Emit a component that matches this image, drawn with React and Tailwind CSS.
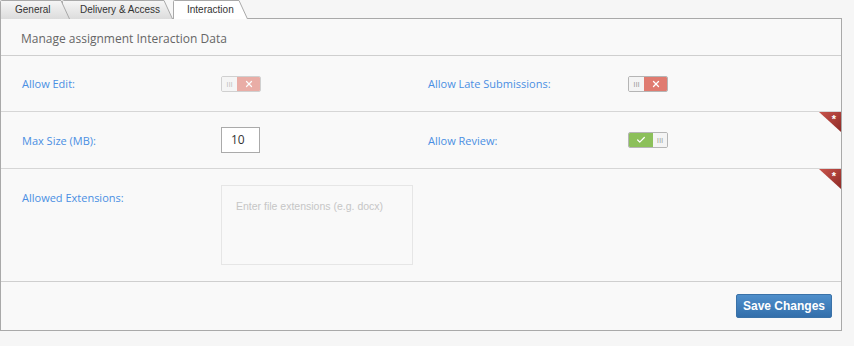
import { Check, X } from "lucide-react";

const Toggle = ({ on, faded }) => (
  <div
    className={`flex h-[16px] w-[40px] overflow-hidden rounded-[2px] border border-[#b5b5b5] ${
      faded ? "opacity-60" : ""
    }`}
  >
    {on ? (
      <>
        <div className="flex w-[24px] items-center justify-center bg-[#8cc05a]">
          <Check size={10} strokeWidth={3} className="text-white" />
        </div>
        <div className="flex flex-1 items-center justify-center bg-[#f4f4f4] text-[8px] leading-none text-[#999]">
          III
        </div>
      </>
    ) : (
      <>
        <div className="flex flex-1 items-center justify-center bg-[#f4f4f4] text-[8px] leading-none text-[#999]">
          III
        </div>
        <div className="flex w-[23px] items-center justify-center bg-[#e07b70]">
          <X size={10} strokeWidth={3} className="text-white" />
        </div>
      </>
    )}
  </div>
);

const Corner = () => (
  <div className="absolute right-0 top-0 h-[20px] w-[22px]">
    <svg width="22" height="20" viewBox="0 0 22 20">
      <defs>
        <linearGradient id="cg" x1="0" y1="0" x2="1" y2="1">
          <stop offset="0" stopColor="#c8544c" />
          <stop offset="1" stopColor="#8e2a26" />
        </linearGradient>
      </defs>
      <polygon points="0,0 22,0 22,20" fill="url(#cg)" />
      <text x="15" y="11" fill="#fff" fontSize="11" fontWeight="bold" fontFamily="Liberation Sans" textAnchor="middle">
        *
      </text>
    </svg>
  </div>
);

const Tab = ({ label, active, width, className, textClass }) => (
  <div className={`relative h-[19px] ${className}`} style={{ width }}>
    <svg className="absolute left-0 top-0" width={width} height="19">
      <defs>
        <linearGradient id="tg" x1="0" y1="0" x2="0" y2="1">
          <stop offset="0" stopColor="#f6f6f6" />
          <stop offset="1" stopColor="#dcdcdc" />
        </linearGradient>
      </defs>
      <path
        d={`M0.5 19 V1.5 Q0.5 0.5 1.5 0.5 H${width - 10} L${width - 1.5} 19`}
        fill={active ? "#ffffff" : "url(#tg)"}
        stroke="#a9a9a9"
      />
    </svg>
    <div className={`relative flex h-full items-center text-[10px] text-[#333] ${textClass}`}>{label}</div>
  </div>
);

export default function App() {
  return (
    <div className="h-[346px] w-[854px] bg-[#f6f6f6] font-['Liberation_Sans',sans-serif]">
      <div className="relative z-10 -mb-[1px] flex h-[19px]">
        <Tab label="General" width={71} className="z-20" textClass="pl-[15px]" />
        <Tab label="Delivery & Access" width={112} className="z-10 -ml-[9px]" textClass="pl-[18px]" />
        <Tab label="Interaction" active width={76} className="z-30 -ml-[1px]" textClass="pl-[14px]" />
      </div>
      <div className="flex h-[313px] w-[842px] flex-col border border-[#a9a9a9] bg-[#f9f9f9] font-['Open_Sans',sans-serif]">
        <div className="flex h-[37px] items-center border-b border-[#cfcfcf] pl-[20px] pt-[3px] text-[12px] text-[#666]">
          Manage assignment Interaction Data
        </div>
        <div className="relative flex h-[56px] items-center border-b border-[#d6d6d6]">
          <div className="flex w-[406px] items-center">
            <span className="w-[220px] pl-[21px] pt-[2px] text-[11px] text-[#4a8fe3]">Allow Edit:</span>
            <Toggle on={false} faded />
          </div>
          <div className="flex items-center">
            <span className="w-[221px] pl-[21px] pt-[2px] text-[11px] text-[#4a8fe3]">Allow Late Submissions:</span>
            <Toggle on={false} />
          </div>
        </div>
        <div className="relative flex h-[57px] items-center border-b border-[#d6d6d6]">
          <Corner />
          <div className="flex w-[406px] items-center">
            <span className="w-[220px] pl-[21px] pt-[2px] text-[11px] text-[#4a8fe3]">Max Size (MB):</span>
            <div className="flex h-[26px] w-[39px] items-center border border-[#aaa] bg-white pl-[9px] text-[12px] text-[#333]">
              10
            </div>
          </div>
          <div className="flex items-center">
            <span className="w-[221px] pl-[21px] pt-[2px] text-[11px] text-[#4a8fe3]">Allow Review:</span>
            <Toggle on />
          </div>
        </div>
        <div className="relative flex h-[113px] border-b border-[#cfcfcf] pt-[16px]">
          <Corner />
          <span className="w-[220px] pl-[21px] pt-[5px] text-[11px] text-[#4a8fe3]">Allowed Extensions:</span>
          <div className="h-[80px] w-[192px] border border-[#e6e6e6] bg-[#f9f9f9] pl-[14px] pt-[13px] font-['Liberation_Sans',sans-serif] text-[10.5px] text-[#c6c6c6]">
            Enter file extensions (e.g. docx)
          </div>
        </div>
        <div className="flex flex-1 items-center justify-end pr-[9px]">
          <button className="h-[24px] w-[96px] rounded-[2px] border border-[#3a72a8] bg-gradient-to-b from-[#4f8fcb] to-[#336fab] font-['Liberation_Sans',sans-serif] text-[12px] font-bold text-white">
            Save Changes
          </button>
        </div>
      </div>
    </div>
  );
}
